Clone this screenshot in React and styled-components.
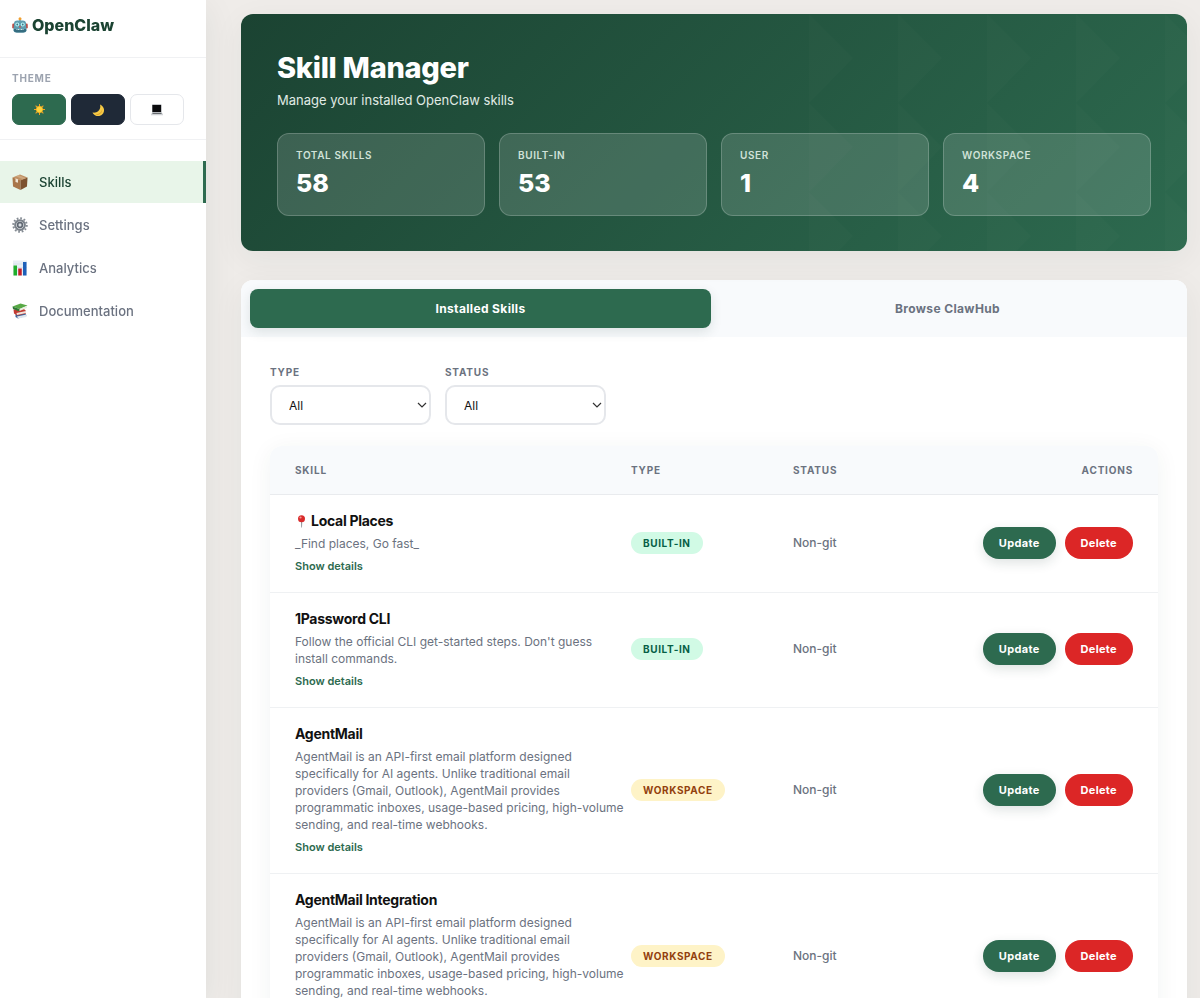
import { useState } from "react";
import styled, { createGlobalStyle } from "styled-components";

const Robot = () => (
    <svg width="16" height="16" viewBox="0 0 32 32" aria-hidden="true">
        <rect x="14.500" y="2" width="3" height="7" fill="#8a8f94" />
        <circle cx="16" cy="3.500" r="3" fill="#f0a030" />
        <rect x="0.500" y="13" width="5" height="10" rx="2.500" fill="#c0453c" />
        <rect x="26.500" y="13" width="5" height="10" rx="2.500" fill="#c0453c" />
        <path d="M4 13q0-6 7-6h10q7 0 7 6l1 13q0 5-6 5H9q-6 0-6-5z" fill="#5f9db0" />
        <path d="M4 24h24l.500 3q-1 4-6 4H9.500q-5 0-6-4z" fill="#356d80" />
        <circle cx="10.500" cy="15" r="4" fill="#b9f3f5" />
        <circle cx="21.500" cy="15" r="4" fill="#b9f3f5" />
        <circle cx="10.500" cy="15" r="1.800" fill="#3f7585" />
        <circle cx="21.500" cy="15" r="1.800" fill="#3f7585" />
        <path d="M16 17l2.500 4h-5z" fill="#d65045" />
        <path d="M9 25h14" stroke="#cfe9ee" strokeWidth="2" strokeDasharray="2 1" />
    </svg>
);

const Sun = () => (
    <svg width="11" height="11" viewBox="0 0 24 24" aria-hidden="true">
        <path
            d="M12 0v24M0 12h24M3.500 3.500l17 17M20.500 3.500l-17 17"
            stroke="#f0a028"
            strokeWidth="2.200"
        />
        <circle cx="12" cy="12" r="7.500" fill="#f7b422" />
        <circle cx="12" cy="12" r="6" fill="#fdd53c" />
    </svg>
);

const Moon = () => (
    <svg width="12" height="12" viewBox="0 0 24 24" aria-hidden="true">
        <path d="M16 1a12 12 0 1 1-15 16c9 2 18-6 15-16z" fill="#f6c945" />
        <path d="M20 9c1 6-6 12-13 12 6 3 15-3 13-12z" fill="#d99b26" />
    </svg>
);

const Laptop = () => (
    <svg width="12" height="12" viewBox="0 0 24 24" aria-hidden="true">
        <rect x="2" y="1" width="19" height="16" rx="1" fill="#8c9095" />
        <rect x="3" y="2" width="17" height="14" fill="#0b0b0d" />
        <path d="M3 17h18l3 4H0z" fill="#a9adb1" />
        <path d="M4 18h16l1 2H3z" fill="#6a6d72" />
        <path d="M0 21h24v1.500H0z" fill="#c9ccd0" />
    </svg>
);

const Package = () => (
    <svg width="16" height="16" viewBox="0 0 32 32" aria-hidden="true">
        <path d="M1 7L17 12v20L2 25z" fill="#a9764a" />
        <path d="M31 7L17 12v20l13-7z" fill="#7d5230" />
        <path d="M1 7L16 1l15 6-14 6z" fill="#c09064" />
        <path d="M7 4.500L13 2l14 6-5 2.500z" fill="#dcc09a" opacity="0.500" />
        <path d="M7 9l5 1.500v7L7 16z" fill="#f1e4d3" />
    </svg>
);

const Gear = () => (
    <svg width="16" height="16" viewBox="0 0 32 32" aria-hidden="true">
        <circle cx="16" cy="16" r="13.500" fill="none" stroke="#858c94" strokeWidth="4" strokeDasharray="3.500 3.570" />
        <circle cx="16" cy="16" r="9.500" fill="none" stroke="#7b828a" strokeWidth="4.500" />
        <circle cx="16" cy="16" r="7" fill="#c5cad0" />
        <circle cx="16" cy="16" r="4.800" fill="none" stroke="#5e6670" strokeWidth="3" />
        <circle cx="16" cy="16" r="2" fill="#dfe3e8" />
    </svg>
);

const Chart = () => (
    <svg width="16" height="16" viewBox="0 0 32 32" aria-hidden="true">
        <rect x="2" y="1" width="28" height="30" fill="#e8eef5" />
        <path d="M2 8h28M2 15h28M2 22h28" stroke="#cbd6e2" />
        <rect x="3" y="11" width="7" height="20" fill="#1fae2b" />
        <rect x="12.500" y="17" width="7" height="14" fill="#c41f28" />
        <rect x="22" y="4" width="7" height="27" fill="#1c5fb8" />
    </svg>
);

const Books = () => (
    <svg width="16" height="16" viewBox="0 0 32 32" aria-hidden="true">
        <path d="M7 22l19-2 3 5-17 6-5-3z" fill="#3d6499" />
        <path d="M10 27l19-4v5l-17 3z" fill="#dfe6ee" />
        <path d="M3 13l20-2 5 5v5l-17 4-7-4z" fill="#c23a32" />
        <path d="M9 20l19-4v4l-18 4z" fill="#f0e4dc" />
        <path d="M1 7L17 1l14 4-16 7z" fill="#58a946" />
        <path d="M1 7l14 5v5L2 12z" fill="#2f7a35" />
        <path d="M15 12l15-6v4l-15 6z" fill="#e9efe2" />
    </svg>
);

const Pin = () => (
    <svg width="13" height="13" viewBox="0 0 26 26" aria-hidden="true">
        <path d="M12 12h2.500l-.500 13h-1.500z" fill="#8d9298" />
        <circle cx="13" cy="7.500" r="7" fill="#d92b2b" />
        <circle cx="11" cy="5" r="2.200" fill="#f39a94" />
    </svg>
);

const navItems = [
    { label: "Skills", icon: <Package />, active: true },
    { label: "Settings", icon: <Gear /> },
    { label: "Analytics", icon: <Chart /> },
    { label: "Documentation", icon: <Books /> },
];

const stats = [
    { label: "Total Skills", value: 58 },
    { label: "Built-in", value: 53 },
    { label: "User", value: 1 },
    { label: "Workspace", value: 4 },
];

const agentMailText =
    "AgentMail is an API-first email platform designed specifically for AI agents. Unlike traditional email providers (Gmail, Outlook), AgentMail provides programmatic inboxes, usage-based pricing, high-volume sending, and real-time webhooks.";

const skills = [
    { name: "Local Places", pin: true, description: "_Find places, Go fast_", type: "Built-in" },
    {
        name: "1Password CLI",
        description: "Follow the official CLI get-started steps. Don't guess install commands.",
        type: "Built-in",
    },
    { name: "AgentMail", description: agentMailText, type: "Workspace" },
    { name: "AgentMail Integration", description: agentMailText, type: "Workspace" },
];

const Filter = ({ id, label, options }) => (
    <Field>
        <FieldLabel htmlFor={id}>{label}</FieldLabel>
        <SelectBox>
            <Select id={id}>
                {options.map((option) => (
                    <option key={option}>{option}</option>
                ))}
            </Select>
            <Chevron viewBox="0 0 10 6" aria-hidden="true">
                <path d="M1 1l4 4 4-4" fill="none" stroke="#333" strokeWidth="1.200" />
            </Chevron>
        </SelectBox>
    </Field>
);

const App = () => {
    const [tab, setTab] = useState("installed");

    return (
        <>
            <GlobalStyle />
            <Shell>
                <Sidebar>
                    <Brand>
                        <Robot />
                        OpenClaw
                    </Brand>
                    <ThemeSection>
                        <ThemeLabel>Theme</ThemeLabel>
                        <ThemeButtons>
                            <ThemeButton aria-label="Light" $bg="#2d6a4f"><Sun /></ThemeButton>
                            <ThemeButton aria-label="Dark" $bg="#1f2937"><Moon /></ThemeButton>
                            <ThemeButton aria-label="System" $bg="#ffffff" $line="#e5e7eb"><Laptop /></ThemeButton>
                        </ThemeButtons>
                    </ThemeSection>
                    <Nav>
                        {navItems.map((item) => (
                            <NavLink key={item.label} href="#" $active={item.active}>
                                {item.icon}
                                {item.label}
                            </NavLink>
                        ))}
                    </Nav>
                </Sidebar>

                <Main>
                    <Hero>
                        <Title>Skill Manager</Title>
                        <Subtitle>Manage your installed OpenClaw skills</Subtitle>
                        <Stats>
                            {stats.map((stat) => (
                                <Stat key={stat.label}>
                                    <StatLabel>{stat.label}</StatLabel>
                                    <StatValue>{stat.value}</StatValue>
                                </Stat>
                            ))}
                        </Stats>
                    </Hero>

                    <Panel>
                        <Tabs>
                            <Tab $active={tab === "installed"} onClick={() => setTab("installed")}>
                                Installed Skills
                            </Tab>
                            <Tab $active={tab === "browse"} onClick={() => setTab("browse")}>
                                Browse ClawHub
                            </Tab>
                        </Tabs>
                        <Content>
                            <Filters>
                                <Filter id="type" label="Type" options={["All", "Built-in", "User", "Workspace"]} />
                                <Filter id="status" label="Status" options={["All", "Non-git"]} />
                            </Filters>
                            <Table>
                                <thead>
                                    <tr>
                                        <Th>Skill</Th>
                                        <Th $width="162px">Type</Th>
                                        <Th $width="162px">Status</Th>
                                        <Th $width="203px">Actions</Th>
                                    </tr>
                                </thead>
                                <tbody>
                                    {skills.map((skill) => (
                                        <tr key={skill.name}>
                                            <Td>
                                                <SkillName>
                                                    {skill.pin && <Pin />}
                                                    {skill.name}
                                                </SkillName>
                                                <Description>{skill.description}</Description>
                                                <DetailsButton>Show details</DetailsButton>
                                            </Td>
                                            <Td>
                                                <Badge $type={skill.type}>{skill.type}</Badge>
                                            </Td>
                                            <Td>
                                                <Status>Non-git</Status>
                                            </Td>
                                            <Td>
                                                <Actions>
                                                    <ActionButton>Update</ActionButton>
                                                    <ActionButton $danger>Delete</ActionButton>
                                                </Actions>
                                            </Td>
                                        </tr>
                                    ))}
                                </tbody>
                            </Table>
                        </Content>
                    </Panel>
                </Main>
            </Shell>
        </>
    );
};

export default App;

const GlobalStyle = createGlobalStyle`
    * {
        box-sizing: border-box;
    }

    body {
        margin: 0;
        font-family: Inter, "Liberation Sans", sans-serif;
        color: #111111;
        background: #efece9;
    }

    button, select {
        font-family: inherit;
        cursor: pointer;
    }
`;

const Shell = styled.div`
    display: flex;
    height: 100vh;
`;

const Sidebar = styled.aside`
    flex: 0 0 206px;
    background: #ffffff;
    box-shadow: 0 8px 32px rgba(28, 50, 50, 0.08);
    z-index: 1;
`;

const Brand = styled.div`
    display: flex;
    align-items: center;
    gap: 4px;
    height: 58px;
    padding: 0 12px 8px;
    border-bottom: 1px solid #f0f1f3;
    color: #1b4332;
    font-size: 16px;
    font-weight: 800;
`;

const ThemeSection = styled.div`
    padding: 14px 12px;
    border-bottom: 1px solid #f0f1f3;
`;

const ThemeLabel = styled.div`
    color: #9ca3af;
    font-size: 10px;
    font-weight: 700;
    line-height: 12px;
    letter-spacing: 0.08em;
    text-transform: uppercase;
`;

const ThemeButtons = styled.div`
    display: flex;
    gap: 5px;
    margin-top: 10px;
`;

const ThemeButton = styled.button`
    display: flex;
    align-items: center;
    justify-content: center;
    width: 54px;
    height: 31px;
    padding: 0;
    border: 1px solid ${(props) => props.$line || props.$bg};
    border-radius: 7px;
    background: ${(props) => props.$bg};
`;

const Nav = styled.nav`
    display: flex;
    flex-direction: column;
    gap: 1px;
    padding-top: 21px;
`;

const NavLink = styled.a`
    display: flex;
    align-items: center;
    gap: 11px;
    height: 42px;
    padding: 0 12px;
    border-right: 3px solid ${(props) => (props.$active ? "#2d6a4f" : "transparent")};
    background: ${(props) => (props.$active ? "#e8f5e9" : "transparent")};
    color: ${(props) => (props.$active ? "#1b4332" : "#6b7280")};
    font-size: 13px;
    font-weight: 500;
    text-decoration: none;
`;

const Main = styled.main`
    flex: 1;
    min-width: 0;
    overflow-y: auto;
    scrollbar-width: none;
    padding: 14px 13px 0 35px;
    background: #efece9;
`;

const Hero = styled.section`
    position: relative;
    overflow: hidden;
    padding: 36px 36px 35px;
    border-radius: 12px;
    background: linear-gradient(135deg, #1b4332 0%, #2d6a4f 100%);
    box-shadow: 0 8px 32px rgba(28, 50, 50, 0.06);
    color: #ffffff;

    /* faint triangle pattern on the right side */
    &::before {
        content: "";
        position: absolute;
        inset: 0 0 0 60%;
        opacity: 0.4;
        background-image: url("data:image/svg+xml,%3Csvg xmlns='http://www.w3.org/2000/svg' width='89' height='89'%3E%3Cpath d='M0 0l44 44L0 89z' fill='%23ffffff' fill-opacity='.03'/%3E%3C/svg%3E");
    }
`;

const Title = styled.h1`
    margin: 0;
    font-size: 29px;
    font-weight: 800;
    line-height: 35px;
    letter-spacing: -0.01em;
`;

const Subtitle = styled.p`
    margin: 5px 0 0;
    color: #e0ebe5;
    font-size: 13px;
    line-height: 20px;
`;

const Stats = styled.div`
    position: relative;
    display: grid;
    grid-template-columns: repeat(4, 1fr);
    gap: 14px;
    margin-top: 23px;
`;

const Stat = styled.div`
    padding: 14px 18px 16px;
    border: 1px solid rgba(255, 255, 255, 0.2);
    border-radius: 12px;
    background: rgba(255, 255, 255, 0.14);
`;

const StatLabel = styled.div`
    color: #d0e2d8;
    font-size: 10px;
    font-weight: 600;
    line-height: 14px;
    letter-spacing: 0.06em;
    text-transform: uppercase;
`;

const StatValue = styled.div`
    margin-top: 5px;
    font-size: 25px;
    font-weight: 800;
    line-height: 32px;
`;

const Panel = styled.section`
    margin-top: 29px;
    overflow: hidden;
    border-radius: 12px;
    background: #ffffff;
    box-shadow: 0 8px 32px rgba(28, 50, 50, 0.06);
`;

const Tabs = styled.div`
    display: flex;
    gap: 6px;
    padding: 9px;
    background: #f8fafc;
`;

const Tab = styled.button`
    flex: 1;
    height: 39px;
    padding: 0;
    border: 0;
    border-radius: 8px;
    background: ${(props) => (props.$active ? "#2d6a4f" : "transparent")};
    box-shadow: ${(props) => (props.$active ? "0 4px 12px rgba(28, 60, 50, 0.12)" : "none")};
    color: ${(props) => (props.$active ? "#ffffff" : "#6b7280")};
    font-size: 12px;
    font-weight: 700;
    letter-spacing: 0.03em;
`;

const Content = styled.div`
    padding: 28px 29px;
`;

const Filters = styled.div`
    display: flex;
    gap: 14px;
`;

const Field = styled.div`
    display: flex;
    flex-direction: column;
    gap: 6px;
    width: 161px;
`;

const FieldLabel = styled.label`
    color: #6b7280;
    font-size: 10px;
    font-weight: 700;
    line-height: 14px;
    letter-spacing: 0.08em;
    text-transform: uppercase;
`;

const SelectBox = styled.div`
    position: relative;
`;

const Select = styled.select`
    appearance: none;
    width: 100%;
    height: 40px;
    padding: 0 17px;
    border: 2px solid #e5e7eb;
    border-radius: 10px;
    background: #ffffff;
    color: #111111;
    font-size: 12px;
`;

const Chevron = styled.svg`
    position: absolute;
    top: 17px;
    right: 4px;
    width: 10px;
    height: 6px;
    pointer-events: none;
`;

const Table = styled.table`
    width: 100%;
    margin-top: 21px;
    overflow: hidden;
    border-spacing: 0;
    border-radius: 12px;
    table-layout: fixed;
    box-shadow: 0 4px 24px rgba(28, 60, 50, 0.06);
`;

const Th = styled.th`
    width: ${(props) => props.$width || "auto"};
    height: 49px;
    padding: 0;
    border-bottom: 1px solid #e9ebee;
    background: #f8fafc;
    color: #6b7280;
    font-size: 10px;
    font-weight: 700;
    letter-spacing: 0.08em;
    text-align: left;
    text-transform: uppercase;

    &:first-child {
        padding-left: 25px;
    }

    &:last-child {
        padding-right: 25px;
        text-align: right;
    }
`;

const Td = styled.td`
    padding: 16px 0 18px;
    border-bottom: 1px solid #eff1f3;
    background: #ffffff;
    line-height: 20px;
    vertical-align: middle;

    &:first-child {
        padding-left: 25px;
        padding-right: 6px;
    }

    &:last-child {
        padding-right: 25px;
    }
`;

const SkillName = styled.div`
    display: flex;
    align-items: center;
    gap: 3px;
    color: #111111;
    font-size: 14px;
    font-weight: 700;
    line-height: 20px;
    letter-spacing: -0.02em;
`;

const Description = styled.p`
    margin: 4px 0 0;
    color: #6b7280;
    font-size: 12px;
    line-height: 17px;
`;

const DetailsButton = styled.button`
    display: block;
    margin-top: 6px;
    padding: 0;
    border: 0;
    background: none;
    color: #2d6a4f;
    font-size: 11px;
    font-weight: 600;
    line-height: 16px;
`;

const Badge = styled.span`
    display: inline-block;
    padding: 4px 12px;
    border-radius: 11px;
    background: ${(props) => (props.$type === "Workspace" ? "#fef3c7" : "#d1fae5")};
    color: ${(props) => (props.$type === "Workspace" ? "#92400e" : "#065f46")};
    font-size: 10px;
    font-weight: 700;
    line-height: 14px;
    letter-spacing: 0.06em;
    text-transform: uppercase;
    vertical-align: middle;
`;

const Status = styled.span`
    display: block;
    color: #6b7280;
    font-size: 12px;
    font-weight: 500;
`;

const Actions = styled.div`
    display: flex;
    justify-content: flex-end;
    gap: 9px;
`;

const ActionButton = styled.button`
    height: 32px;
    padding: 0 16px;
    border: 0;
    border-radius: 16px;
    background: ${(props) => (props.$danger ? "#dc2626" : "#2d6a4f")};
    box-shadow: ${(props) => (props.$danger ? "none" : "0 4px 12px rgba(28, 60, 50, 0.14)")};
    color: #ffffff;
    font-size: 11px;
    font-weight: 700;
    letter-spacing: 0.03em;
`;
